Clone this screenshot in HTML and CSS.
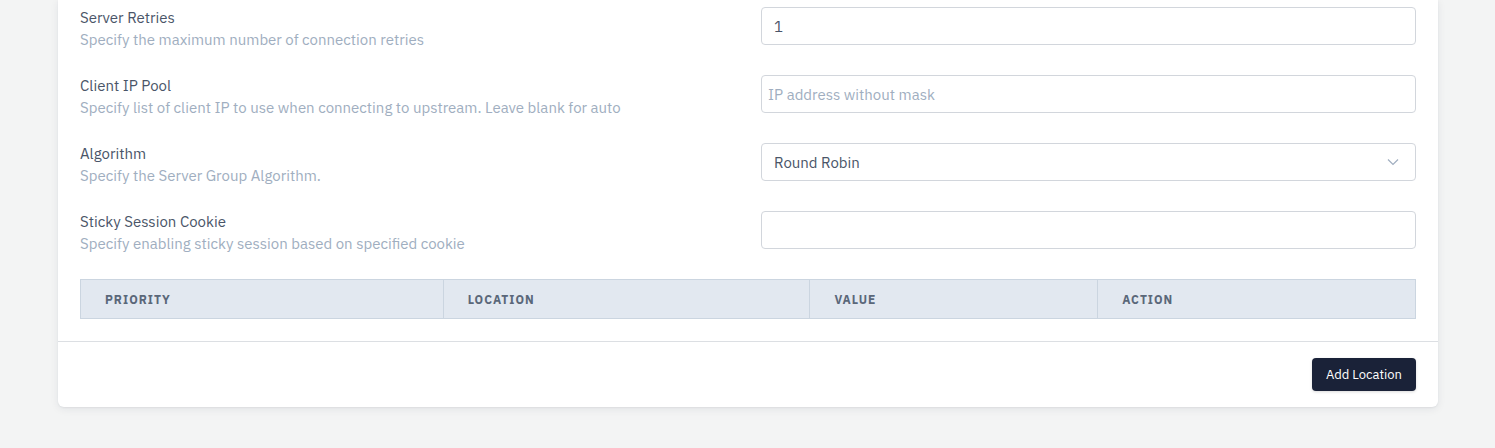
FILE: index.html
```html
<!DOCTYPE html>
<html>
<head>
<meta charset="utf-8">
<link rel="stylesheet" href="styles.css">
</head>
<body>
<div class="card">
  <div class="card-body">
    <div class="row">
      <div class="label-col">
        <div class="label">Server Retries</div>
        <div class="desc">Specify the maximum number of connection retries</div>
      </div>
      <div class="field"><input class="input" type="text" value="1"></div>
    </div>
    <div class="row">
      <div class="label-col">
        <div class="label">Client IP Pool</div>
        <div class="desc">Specify list of client IP to use when connecting to upstream. Leave blank for auto</div>
      </div>
      <div class="field"><input class="input input-tags" type="text" placeholder="IP address without mask"></div>
    </div>
    <div class="row">
      <div class="label-col">
        <div class="label">Algorithm</div>
        <div class="desc">Specify the Server Group Algorithm.</div>
      </div>
      <div class="field">
        <div class="select">
          <span>Round Robin</span>
          <svg class="chev" width="12" height="8" viewBox="0 0 12 8"><path d="M1 1.5 L6 6.5 L11 1.5" fill="none" stroke="#a0aec0" stroke-width="1.2"/></svg>
        </div>
      </div>
    </div>
    <div class="row">
      <div class="label-col">
        <div class="label">Sticky Session Cookie</div>
        <div class="desc">Specify enabling sticky session based on specified cookie</div>
      </div>
      <div class="field"><input class="input" type="text"></div>
    </div>
    <table class="table">
      <thead>
        <tr>
          <th class="c1">Priority</th>
          <th class="c2">Location</th>
          <th class="c3">Value</th>
          <th class="c4">Action</th>
        </tr>
      </thead>
    </table>
  </div>
  <div class="card-footer">
    <button class="btn">Add Location</button>
  </div>
</div>
</body>
</html>
```
FILE: styles.css
```css
* { box-sizing: border-box; }
html, body { margin: 0; padding: 0; }
body {
  background: #f3f4f4;
  font-family: "IBM Plex Sans", "Noto Sans", "Liberation Sans", sans-serif;
  width: 1495px;
  height: 448px;
  overflow: hidden;
}
.card {
  margin-left: 58px;
  width: 1380px;
  background: #fff;
  border-radius: 0 0 6px 6px;
  box-shadow: 0 2px 8px rgba(30, 40, 60, 0.08), 0 1px 2px rgba(30, 40, 60, 0.06);
}
.card-body {
  padding: 7px 22px 22px 22px;
}
.row {
  display: grid;
  grid-template-columns: 681px 655px;
  grid-template-rows: 38px;
  margin-bottom: 30px;
}
.label-col { padding-top: 1px; height: 38px; overflow: visible; }
.label {
  font-size: 15px;
  line-height: 20px;
  color: #4a5568;
}
.desc {
  font-size: 15px;
  line-height: 23px;
  color: #a0aec0;
}
.input, .select {
  width: 655px;
  height: 38px;
  border: 1px solid #d2d6dc;
  border-radius: 4px;
  padding: 0 12px;
  font-family: inherit;
  font-size: 15px;
  color: #4a5568;
  background: #fff;
  outline: none;
}
.input-tags { padding: 0 6px; }
.input::placeholder { color: #a0aec0; font-size: 15px; }
.select {
  display: flex;
  align-items: center;
  justify-content: space-between;
  padding: 0 16px 0 12px;
}
.table {
  width: 1336px;
  border-collapse: collapse;
}
.table th {
  background: #e2e8f0;
  border: 1px solid #cbd5e0;
  height: 39px;
  padding: 0 24px;
  text-align: left;
  font-size: 12px;
  font-weight: 700;
  letter-spacing: 1px;
  text-transform: uppercase;
  color: #5a6779;
}
.c1 { width: 363px; }
.c2 { width: 367px; }
.c3 { width: 288px; }
.c4 { width: 318px; }
.card-footer {
  border-top: 1px solid #dcdfe3;
  padding: 16px 22px 16px 22px;
  display: flex;
  justify-content: flex-end;
}
.btn {
  background: #1a2238;
  color: #fff;
  border: none;
  border-radius: 4px;
  height: 33px;
  padding: 0 14px;
  font-family: inherit;
  font-size: 13px;
  box-shadow: 0 1px 3px rgba(0,0,0,0.15);
}
```
